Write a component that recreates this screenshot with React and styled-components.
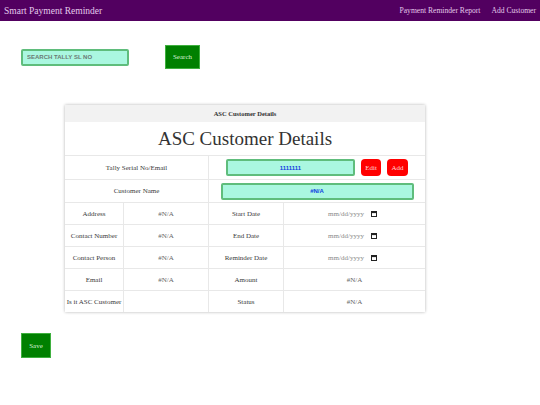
import React from "react";
import styled, { createGlobalStyle } from "styled-components";

const GlobalStyle = createGlobalStyle`
	body {
		margin: 0;
		background: #fff;
		font-family: "Liberation Serif", "Times New Roman", serif;
	}
`;

const Navbar = styled.nav`
	height: 21px;
	background: #520060;
	display: flex;
	align-items: center;
	justify-content: space-between;
	padding: 0 4px;
	color: #e2c8ea;
`;

const Brand = styled.div`
	font-size: 9.5px;
`;

const NavLinks = styled.div`
	display: flex;
	gap: 11px;
	font-size: 7.6px;
`;

const SearchRow = styled.div`
	display: flex;
	align-items: center;
	gap: 36px;
	margin: 24px 0 0 21px;
`;

const TealInput = styled.input`
	box-sizing: border-box;
	width: ${p => p.$w}px;
	height: 17px;
	background: #aaf7e0;
	border: 2px solid #5fbd7c;
	border-radius: 2px;
	outline: none;
	padding: 0 4px;
	font-family: "Liberation Sans", Arial, sans-serif;
	font-weight: bold;
	font-size: 6px;
	color: #1040e0;
	text-align: ${p => (p.$center ? "center" : "left")};
	&::placeholder {
		color: #6a7a74;
	}
`;

const GreenButton = styled.button`
	width: ${p => p.$w}px;
	height: ${p => p.$h}px;
	background: #008000;
	border: 1px solid #3fb03f;
	color: #d8f0d8;
	font-family: "Liberation Serif", serif;
	font-size: 7px;
	padding: 0;
`;

const Card = styled.div`
	width: 360px;
	margin: 36px 0 0 65px;
	box-shadow: 0 0 3px rgba(0, 0, 0, 0.3);
	display: grid;
	grid-template-columns: 58px 85px 75px 142px;
	grid-template-rows: 17px 33px 24px 23px 22px 22px 22px 22px 22px;
`;

const Cell = styled.div`
	grid-column: span ${p => p.$span || 1};
	display: flex;
	align-items: center;
	justify-content: center;
	gap: 6px;
	font-size: 7px;
	color: #3a3a3a;
	border-top: 1px solid #e8e8e8;
	border-left: ${p => (p.$first ? "none" : "1px solid #e8e8e8")};
	box-sizing: border-box;
	white-space: nowrap;
`;

const HeaderCell = styled.div`
	grid-column: 1 / -1;
	background: #f2f2f2;
	font-size: 6.5px;
	font-weight: bold;
	color: #333;
	display: flex;
	align-items: center;
	justify-content: center;
`;

const TitleCell = styled.div`
	grid-column: 1 / -1;
	font-size: 19px;
	color: #333;
	display: flex;
	align-items: center;
	justify-content: center;
`;

const RedButton = styled.button`
	width: ${p => p.$w}px;
	height: 17px;
	background: #ff0000;
	border: none;
	border-radius: 4px;
	color: #ffd6d6;
	font-family: "Liberation Serif", serif;
	font-size: 7px;
	padding: 0;
`;

const NaText = styled.span`
	color: #666;
	font-size: 7px;
`;

const DateField = styled.div`
	display: flex;
	align-items: center;
	gap: 7px;
	color: #888;
	font-size: 7px;
	margin-right: 4px;
`;

const SaveWrap = styled.div`
	margin: 21px 0 0 21px;
`;

const CalendarIcon = () => (
	<svg width="6" height="6" viewBox="0 0 6 6">
		<rect x="0.5" y="0.5" width="5" height="5" fill="none" stroke="#222" strokeWidth="1" />
		<rect x="0.5" y="0.5" width="5" height="1.6" fill="#222" />
	</svg>
);

const DateInput = () => (
	<DateField>
		mm/dd/yyyy
		<CalendarIcon />
	</DateField>
);

const rows = [
	["Address", "#N/A", "Start Date", <DateInput />],
	["Contact Number", "#N/A", "End Date", <DateInput />],
	["Contact Person", "#N/A", "Reminder Date", <DateInput />],
	["Email", "#N/A", "Amount", <NaText>#N/A</NaText>],
	["Is it ASC Customer", "", "Status", <NaText>#N/A</NaText>],
];

const App = () => (
	<>
		<GlobalStyle />
		<Navbar>
			<Brand>Smart Payment Reminder</Brand>
			<NavLinks>
				<span>Payment Reminder Report</span>
				<span>Add Customer</span>
			</NavLinks>
		</Navbar>
		<SearchRow>
			<TealInput $w={108} placeholder="SEARCH TALLY SL NO" />
			<GreenButton $w={35} $h={24}>Search</GreenButton>
		</SearchRow>
		<Card>
			<HeaderCell>ASC Customer Details</HeaderCell>
			<TitleCell>ASC Customer Details</TitleCell>
			<Cell $span={2} $first>Tally Serial No/Email</Cell>
			<Cell $span={2}>
				<TealInput $w={129} $center defaultValue="1111111" />
				<RedButton $w={20}>Edit</RedButton>
				<RedButton $w={21}>Add</RedButton>
			</Cell>
			<Cell $span={2} $first>Customer Name</Cell>
			<Cell $span={2}>
				<TealInput $w={193} $center defaultValue="#N/A" />
			</Cell>
			{rows.map(([a, b, c, d]) => (
				<React.Fragment key={a}>
					<Cell $first>{a}</Cell>
					<Cell><NaText>{b}</NaText></Cell>
					<Cell>{c}</Cell>
					<Cell>{d}</Cell>
				</React.Fragment>
			))}
		</Card>
		<SaveWrap>
			<GreenButton $w={30} $h={25}>Save</GreenButton>
		</SaveWrap>
	</>
);

export default App;
